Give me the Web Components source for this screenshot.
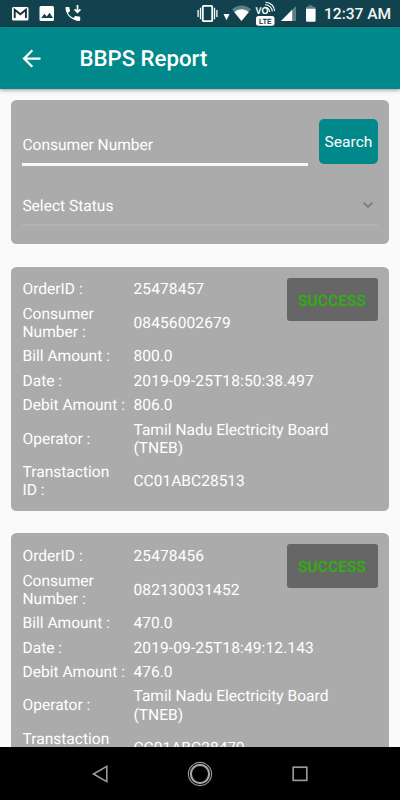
<!DOCTYPE html>
<html lang="en">
<head>
<meta charset="utf-8">
<title>BBPS Report</title>
<style>
  html, body {
    margin: 0;
    height: 100%;
    overflow: hidden;
  }
  body {
    background: #fafafa;
    font-family: Roboto, "Noto Sans", sans-serif;
    text-rendering: geometricPrecision;
  }
</style>
</head>
<body>
<report-screen>
  <status-bar slot="top" time="12:37 AM"></status-bar>
  <app-bar slot="top">BBPS Report</app-bar>
  <search-card button="Search">
    <span slot="number">Consumer Number</span>
    <span slot="status">Select Status</span>
  </search-card>
  <order-card status="SUCCESS">
    <order-row numeric label="OrderID :">25478457</order-row>
    <order-row numeric label="Consumer Number :">08456002679</order-row>
    <order-row label="Bill Amount :">800.0</order-row>
    <order-row numeric label="Date :">2019-09-25T18:50:38.497</order-row>
    <order-row label="Debit Amount :">806.0</order-row>
    <order-row label="Operator :">Tamil Nadu Electricity Board (TNEB)</order-row>
    <order-row label="Transtaction ID :">CC01ABC28513</order-row>
  </order-card>
  <order-card status="SUCCESS">
    <order-row numeric label="OrderID :">25478456</order-row>
    <order-row numeric label="Consumer Number :">082130031452</order-row>
    <order-row label="Bill Amount :">470.0</order-row>
    <order-row numeric label="Date :">2019-09-25T18:49:12.143</order-row>
    <order-row label="Debit Amount :">476.0</order-row>
    <order-row label="Operator :">Tamil Nadu Electricity Board (TNEB)</order-row>
    <order-row label="Transtaction ID :">CC01ABC28479</order-row>
  </order-card>
  <nav-bar slot="bottom"></nav-bar>
</report-screen>

<script>
class ReportScreen extends HTMLElement {
  constructor() {
    super();
    this.attachShadow({ mode: "open" });
    this.shadowRoot.innerHTML = `
      <style>
        :host {
          display: flex;
          flex-direction: column;
          height: 100vh;
          background: #fafafa;
          font-size: 15.56px;
          line-height: 18.2px;
          color: #fff;
        }
        header {
          position: relative;
          z-index: 1;
          flex: none;
        }
        main {
          flex: 1;
          min-height: 0;
          overflow: hidden;
          display: flex;
          flex-direction: column;
          gap: 22.3px;
          padding: 11px 11px 0;
        }
      </style>
      <header><slot name="top"></slot></header>
      <main><slot></slot></main>
      <slot name="bottom"></slot>
    `;
  }
}

class StatusBar extends HTMLElement {
  constructor() {
    super();
    this.attachShadow({ mode: "open" });
    this.shadowRoot.innerHTML = `
      <style>
        :host {
          display: flex;
          justify-content: space-between;
          height: 27px;
          background: #12424d;
          color: #f2f5f6;
        }
        svg {
          display: block;
          flex: none;
        }
        .right {
          display: flex;
        }
        .time {
          width: 76px;
          font-size: 15.56px;
          font-weight: 500;
          line-height: 29px;
          white-space: nowrap;
        }
        .lte {
          font: 700 7.5px "Liberation Sans", sans-serif;
        }
        .vo {
          font: 700 10px "Liberation Sans", sans-serif;
        }
      </style>
      <svg width="100" height="27" viewBox="0 0 100 27">
        <rect x="12" y="7" width="16.500" height="13.500" rx="1.500" fill="#fff"/>
        <path d="M14.700 18V9.700l5.600 4.600 5.600-4.600V18" fill="none" stroke="#12303c" stroke-width="1.900"/>
        <rect x="39.500" y="6" width="14.500" height="15" rx="1.500" fill="#fff"/>
        <path d="M41.200 18l3.300-4.200 2.200 2.600 2.900-3.700 3.400 5.300z" fill="#12424d"/>
        <path d="M66 7.200h3.200l.9 4-2.100 2c1.400 2.500 2.900 3.900 5.200 5l2.100-2 4.900.9V20.400c0 .5-.4.800-.8.800C72 21.200 65.500 15.200 65.500 7.800c0-.3.200-.6.500-.6z" fill="#fff" transform="translate(0 -.3)"/>
        <path d="M77.500 5v6.500M74.600 9.300l2.900 2.900 2.900-2.900" fill="none" stroke="#fff" stroke-width="1.700"/>
      </svg>
      <div class="right">
        <svg width="127" height="27" viewBox="197 0 127 27">
          <rect x="202.800" y="5.800" width="9.400" height="15.400" rx="1" fill="none" stroke="#fff" stroke-width="1.800"/>
          <path d="M200.500 7.800v11.400M198.100 10v7M214.500 7.800v11.400M216.900 10v7" stroke="#fff" stroke-width="1.300"/>
          <path d="M223.500 14h6l-3 6.200z" fill="#fff"/>
          <path d="M232 9.200c5.500-5.100 13.500-5.100 19 0L241.500 21z" fill="#5b8087"/>
          <path d="M234.400 12.200c4.300-3.800 9.900-3.800 14.200 0L241.500 21z" fill="#fff"/>
          <text class="vo" x="255.500" y="14" fill="#fff" textLength="13" lengthAdjust="spacingAndGlyphs">VO</text>
          <path d="M264.500 7.400c2.800-.2 5 1.700 5.200 4.600M265 4.800c4-.1 7 2.700 7.300 6.700M265.400 2.200c5.100.1 9 3.800 9.200 8.800" fill="none" stroke="#fff" stroke-width="1.100"/>
          <rect x="256" y="16" width="18.500" height="9.800" rx="2.500" fill="#fff"/>
          <text class="lte" x="259" y="23.800" fill="#12303c" textLength="12.500" lengthAdjust="spacingAndGlyphs">LTE</text>
          <path d="M296 6v15h-15z" fill="#5b8087"/>
          <path d="M292.200 9.800V21H281z" fill="#fff"/>
          <path d="M306 6.800h2.400V5.300h4v1.500h3v2.400H306z" fill="#5b8087"/>
          <path d="M306 8.800h9.600V20.500q0 1.300-1.300 1.300h-7q-1.300 0-1.300-1.300z" fill="#fff"/>
        </svg>
        <span class="time"></span>
      </div>
    `;
  }

  connectedCallback() {
    this.shadowRoot.querySelector(".time").innerText = this.getAttribute("time");
  }
}

class AppBar extends HTMLElement {
  constructor() {
    super();
    this.attachShadow({ mode: "open" });
    this.shadowRoot.innerHTML = `
      <style>
        :host {
          display: flex;
          align-items: center;
          height: 62px;
          background: #00888a;
          box-shadow: 0 1px 4px rgba(0, 0, 0, .4);
          font-size: 22.2px;
          font-weight: 500;
          line-height: 26px;
        }
        svg {
          flex: none;
          margin: 0 34.500px 0 17.5px;
        }
        .title {
          padding: 2px 0 0 .5px;
        }
      </style>
      <svg width="27" height="27" viewBox="0 0 24 24"><path d="M20 11H7.830l5.590-5.590L12 4l-8 8 8 8 1.410-1.410L7.830 13H20v-2z" fill="#fff"/></svg>
      <span class="title"><slot></slot></span>
    `;
  }
}

class SearchCard extends HTMLElement {
  constructor() {
    super();
    this.attachShadow({ mode: "open" });
    this.shadowRoot.innerHTML = `
      <style>
        :host {
          display: block;
          box-sizing: border-box;
          flex: none;
          height: 144.3px;
          padding: 19px 11px 0 11.4px;
          background: #ababab;
          border-radius: 5.5px;
        }
        .number {
          display: flex;
          gap: 11px;
        }
        .field {
          box-sizing: border-box;
          flex: 1;
          height: 47px;
          padding-top: 17px;
          border-bottom: 3px solid #f8f8f8;
        }
        button {
          width: 59px;
          height: 44.500px;
          padding: 2px 0 0;
          border: 0;
          border-radius: 5px;
          background: #00888a;
          color: #fff;
          font: inherit;
        }
        .select {
          display: flex;
          justify-content: space-between;
          align-items: center;
          box-sizing: border-box;
          height: 38px;
          margin-top: 22px;
          padding-right: 4px;
          border-bottom: 2px solid #b2b2b2;
        }
        .select svg {
          margin-bottom: 2px;
        }
      </style>
      <div class="number">
        <div class="field"><slot name="number"></slot></div>
        <button></button>
      </div>
      <div class="select">
        <slot name="status"></slot>
        <svg width="12" height="8" viewBox="0 0 12 8"><path d="M1.500 1.500L6 6l4.500-4.500" fill="none" stroke="#808080" stroke-width="1.800"/></svg>
      </div>
    `;
  }

  connectedCallback() {
    this.shadowRoot.querySelector("button").innerText = this.getAttribute("button");
  }
}

class OrderCard extends HTMLElement {
  constructor() {
    super();
    this.attachShadow({ mode: "open" });
    this.shadowRoot.innerHTML = `
      <style>
        :host {
          display: flex;
          flex-direction: column;
          position: relative;
          box-sizing: border-box;
          flex: none;
          height: 244.4px;
          gap: 6.2px;
          padding: 13.9px 11.5px 0;
          background: #ababab;
          border-radius: 5.5px;
        }
        /* sits over the first two rows */
        .badge {
          position: absolute;
          top: 11px;
          right: 11px;
          box-sizing: border-box;
          width: 91px;
          height: 43.5px;
          padding-right: 1px;
          border-radius: 3px;
          background: #666;
          color: #32ac14;
          font-weight: 700;
          line-height: 46px;
          text-align: center;
        }
      </style>
      <slot></slot>
      <div class="badge"></div>
    `;
  }

  connectedCallback() {
    this.shadowRoot.querySelector(".badge").innerText = this.getAttribute("status");
  }
}

class OrderRow extends HTMLElement {
  constructor() {
    super();
    this.attachShadow({ mode: "open" });
    this.shadowRoot.innerHTML = `
      <style>
        :host {
          display: grid;
          grid-template-columns: 105px 222px;
          column-gap: 6px;
          align-items: center;
        }
        :host([numeric]) .value {
          letter-spacing: .1px;
        }
      </style>
      <span class="label"></span>
      <span class="value"><slot></slot></span>
    `;
  }

  connectedCallback() {
    this.shadowRoot.querySelector(".label").innerText = this.getAttribute("label");
  }
}

class NavBar extends HTMLElement {
  constructor() {
    super();
    this.attachShadow({ mode: "open" });
    this.shadowRoot.innerHTML = `
      <style>
        :host {
          display: flex;
          justify-content: center;
          align-items: center;
          gap: 74px;
          flex: none;
          height: 53px;
          background: #000;
        }
      </style>
      <svg width="26" height="26" viewBox="0 0 26 26"><path d="M19.800 5.300v15.400L6.500 13z" fill="none" stroke="#999" stroke-width="1.600"/></svg>
      <svg width="26" height="26" viewBox="0 0 26 26" fill="none"><circle cx="13" cy="13" r="11.600" stroke="#999" stroke-width="1.100"/><circle cx="13" cy="13" r="9.100" stroke="#a5a5a5" stroke-width="2.200"/></svg>
      <svg width="26" height="26" viewBox="0 0 26 26"><rect x="6.200" y="6.200" width="13.600" height="13.200" fill="none" stroke="#999" stroke-width="1.700"/></svg>
    `;
  }
}

customElements.define("report-screen", ReportScreen);
customElements.define("status-bar", StatusBar);
customElements.define("app-bar", AppBar);
customElements.define("search-card", SearchCard);
customElements.define("order-card", OrderCard);
customElements.define("order-row", OrderRow);
customElements.define("nav-bar", NavBar);
</script>
</body>
</html>
